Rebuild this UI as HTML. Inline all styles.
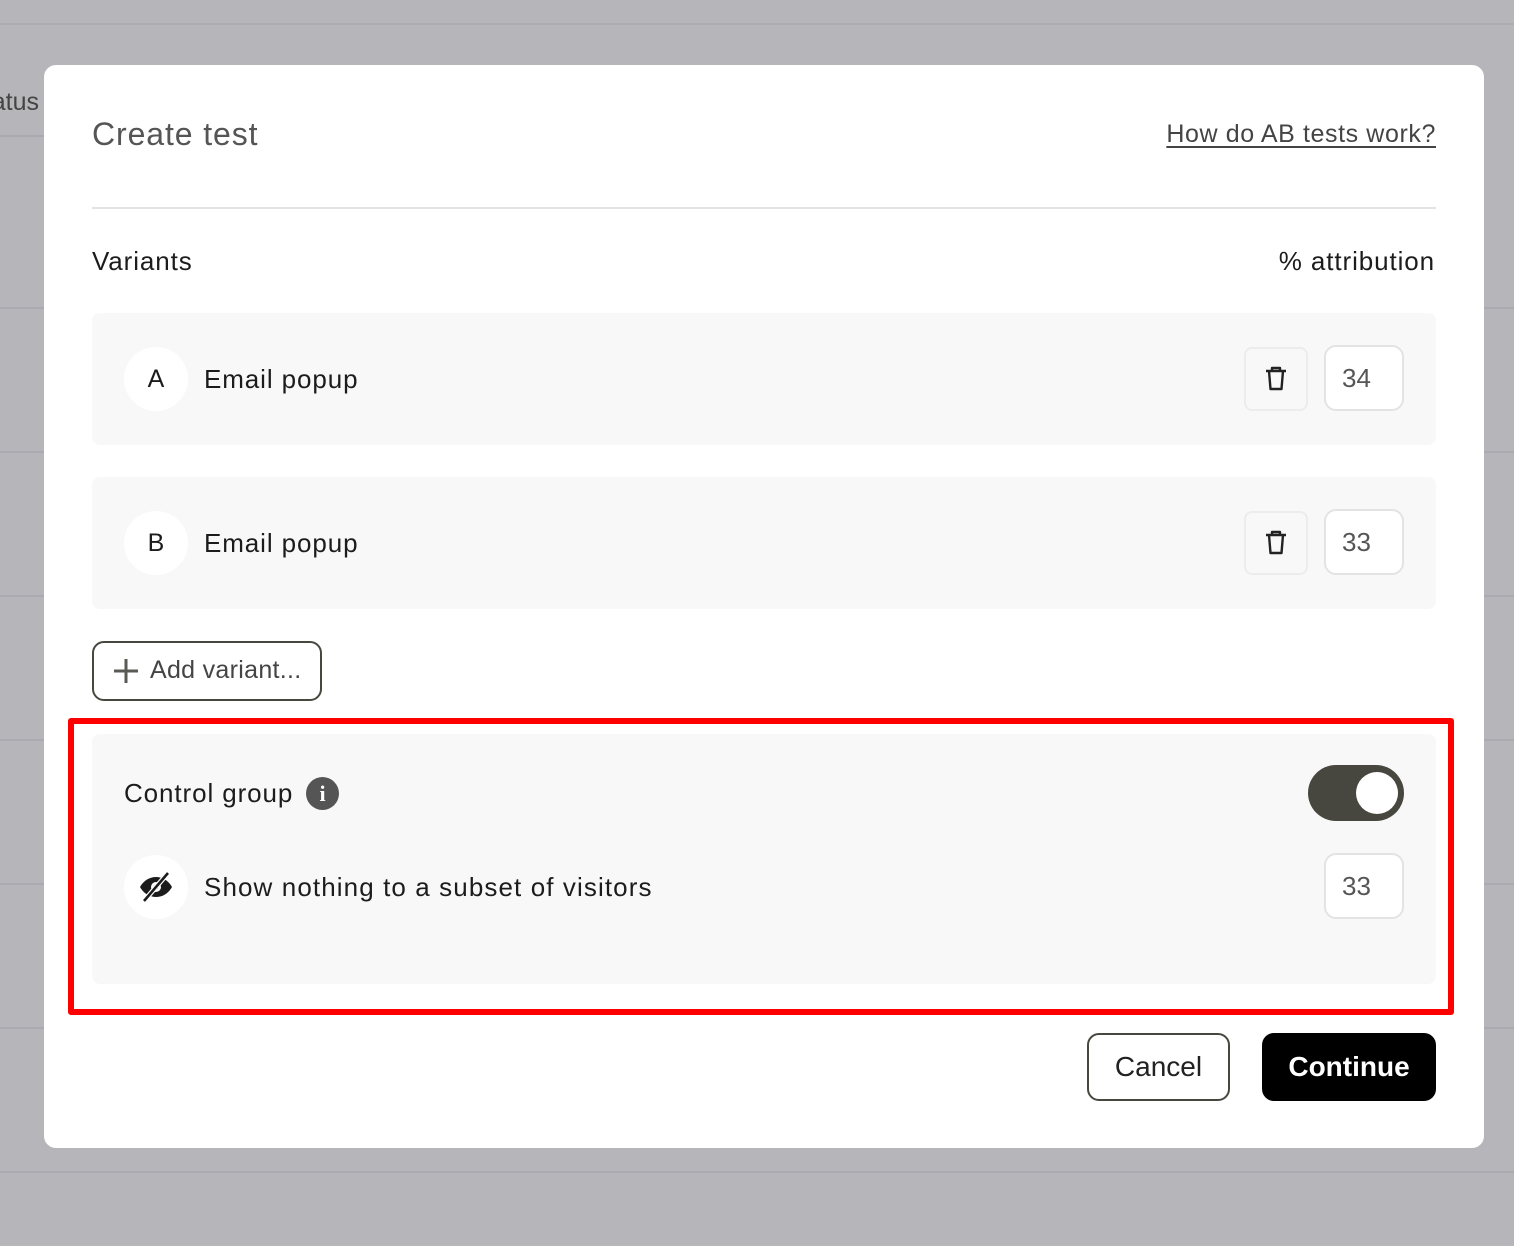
<!DOCTYPE html>
<html><head><meta charset="utf-8"><style>
*{box-sizing:border-box;margin:0;padding:0}
body{width:1514px;height:1246px;background:#b6b5ba;position:relative;overflow:hidden;font-family:"Liberation Sans",sans-serif;color:#1c1c1c;letter-spacing:0.9px}
.a{position:absolute}
.hl{position:absolute;height:2px;background:#abaab0}
.modal{left:44px;top:65px;width:1440px;height:1083px;background:#fff;border-radius:12px}
.card{background:#f8f8f8;border-radius:8px}
.circ{width:64px;height:64px;border-radius:50%;background:#fff;display:flex;align-items:center;justify-content:center;font-size:25px;letter-spacing:0}
.lbl{font-size:26px;color:#1c1c1c}
.trash{width:64px;height:64px;border:2px solid #ececea;border-radius:8px;display:flex;align-items:center;justify-content:center}
.num{width:80px;height:66px;border:2px solid #e3e3e3;border-radius:12px;background:#fff;font-size:26px;color:#555;padding-left:16px;line-height:62px;letter-spacing:0}
</style></head><body>
<div class="hl" style="left:0;top:23px;width:1514px;background:#adacb1"></div>
<div class="hl" style="left:0;top:135px;width:44px"></div>
<div class="a" style="right:1475px;top:88px;font-size:25px;color:#444;letter-spacing:0">atus</div>
<div class="hl" style="left:0;top:307px;width:1514px"></div>
<div class="hl" style="left:0;top:451px;width:1514px"></div>
<div class="hl" style="left:0;top:595px;width:1514px"></div>
<div class="hl" style="left:0;top:739px;width:1514px"></div>
<div class="hl" style="left:0;top:883px;width:1514px"></div>
<div class="hl" style="left:0;top:1027px;width:1514px"></div>
<div class="hl" style="left:0;top:1171px;width:1514px"></div>

<div class="a modal"></div>
<div class="a" style="left:92px;top:116px;font-size:32px;color:#555">Create test</div>
<div class="a" style="right:78px;top:120px;font-size:25px;color:#444;text-decoration:underline;text-underline-offset:4px;letter-spacing:0.6px">How do AB tests work?</div>
<div class="a" style="left:92px;top:207px;width:1344px;height:2px;background:#e3e3e3"></div>
<div class="a" style="left:92px;top:246px;font-size:26px">Variants</div>
<div class="a" style="right:79px;top:246px;font-size:26px">% attribution</div>

<div class="a card" style="left:92px;top:313px;width:1344px;height:132px"></div>
<div class="a circ" style="left:124px;top:347px">A</div>
<div class="a lbl" style="left:204px;top:364px">Email popup</div>
<div class="a trash" style="left:1244px;top:347px"><svg width="26" height="28" viewBox="0 0 26 28" fill="none" stroke="#222" stroke-width="2.4" stroke-linejoin="round"><path d="M3 6h20M9 6V3h8v3M6 6l1.5 18h11L20 6"/></svg></div>
<div class="a num" style="left:1324px;top:345px">34</div>

<div class="a card" style="left:92px;top:477px;width:1344px;height:132px"></div>
<div class="a circ" style="left:124px;top:511px">B</div>
<div class="a lbl" style="left:204px;top:528px">Email popup</div>
<div class="a trash" style="left:1244px;top:511px"><svg width="26" height="28" viewBox="0 0 26 28" fill="none" stroke="#222" stroke-width="2.4" stroke-linejoin="round"><path d="M3 6h20M9 6V3h8v3M6 6l1.5 18h11L20 6"/></svg></div>
<div class="a num" style="left:1324px;top:509px">33</div>

<div class="a" style="left:92px;top:641px;width:230px;height:60px;border:2px solid #48473f;border-radius:12px"></div>
<svg class="a" style="left:114px;top:658px" width="24" height="26" viewBox="0 0 24 26"><path d="M12 1v24M0 13h24" stroke="#5a5a55" stroke-width="3"/></svg>
<div class="a" style="left:150px;top:656px;font-size:25px;color:#444;letter-spacing:0.3px">Add variant...</div>

<div class="a card" style="left:92px;top:734px;width:1344px;height:250px"></div>
<div class="a" style="left:68px;top:718px;width:1386px;height:297px;border:6px solid #ff0000;border-radius:3px"></div>
<div class="a lbl" style="left:124px;top:778px">Control group</div>
<div class="a" style="left:306px;top:777px;width:33px;height:33px;border-radius:50%;background:#555;color:#fff;font-size:22px;font-weight:bold;text-align:center;line-height:33px;font-family:'Liberation Serif',serif;letter-spacing:0">i</div>
<div class="a" style="left:1308px;top:765px;width:96px;height:56px;border-radius:28px;background:#48473f"></div>
<div class="a" style="left:1356px;top:772px;width:42px;height:42px;border-radius:50%;background:#fff"></div>
<div class="a circ" style="left:124px;top:855px"><svg width="36" height="30" viewBox="0 0 36 30"><path d="M2 15C6 8 12 5 18 5s12 3 16 10c-4 7-10 10-16 10S6 22 2 15z" fill="#1c1c1c"/><circle cx="18" cy="15" r="5" fill="#fff"/><circle cx="18" cy="15" r="2.6" fill="#1c1c1c"/><path d="M30 1L6 29" stroke="#fff" stroke-width="5"/><path d="M30 1L6 29" stroke="#1c1c1c" stroke-width="2.6"/></svg></div>
<div class="a lbl" style="left:204px;top:872px;letter-spacing:1.1px">Show nothing to a subset of visitors</div>
<div class="a num" style="left:1324px;top:853px">33</div>

<div class="a" style="left:1087px;top:1033px;width:143px;height:68px;border:2px solid #48473f;border-radius:12px;font-size:28px;text-align:center;line-height:64px;color:#222;letter-spacing:0">Cancel</div>
<div class="a" style="left:1262px;top:1033px;width:174px;height:68px;background:#000;border-radius:12px;font-size:28px;font-weight:bold;text-align:center;line-height:68px;color:#fff;letter-spacing:0">Continue</div>
</body></html>
